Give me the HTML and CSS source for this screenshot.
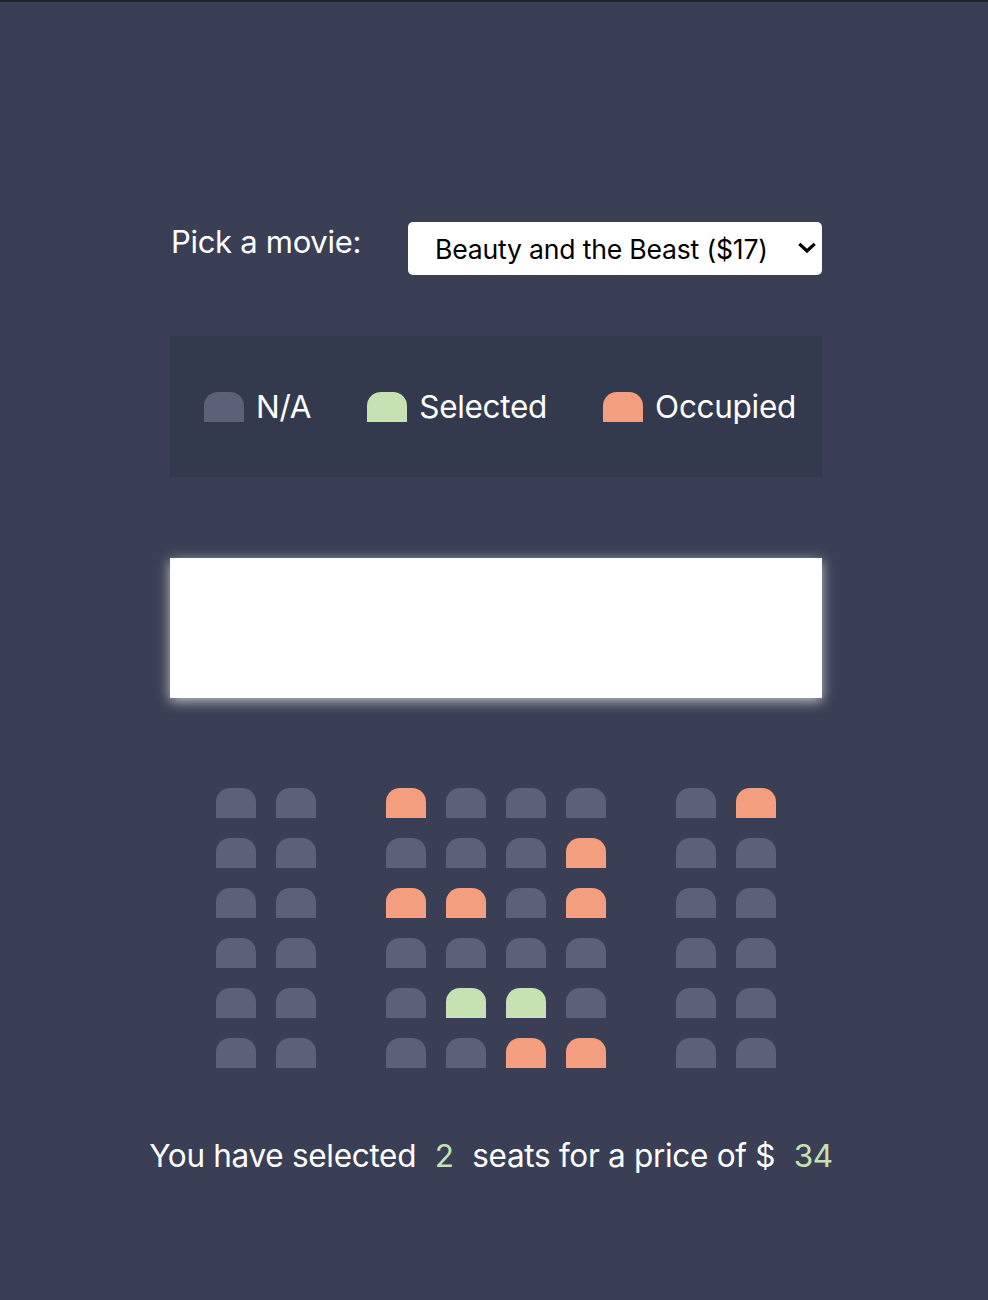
FILE: index.html
```html
<!DOCTYPE html>
<html lang="en">
<head>
<meta charset="UTF-8">
<title>Movie Seat Booking</title>
<link rel="stylesheet" href="styles.css">
</head>
<body>
<div class="page">
  <div class="movie-picker">
    <label class="picker-label" for="movie">Pick a movie:</label>
    <div class="select-wrap">
      <select id="movie" class="movie-select">
        <option>Beauty and the Beast ($17)</option>
      </select>
      <svg class="chevron" width="18" height="12" viewBox="0 0 18 12"><path d="M2.5 3 L9 9 L15.5 3" fill="none" stroke="#000" stroke-width="3.2" stroke-linecap="square" stroke-linejoin="miter"/></svg>
    </div>
  </div>

  <ul class="showcase">
    <li class="legend-item"><span class="seat"></span><span class="legend-text">N/A</span></li>
    <li class="legend-item"><span class="seat selected"></span><span class="legend-text">Selected</span></li>
    <li class="legend-item"><span class="seat occupied"></span><span class="legend-text">Occupied</span></li>
  </ul>

  <div class="screen"></div>

  <div class="seats">
    <div class="row">
      <span class="seat"></span><span class="seat"></span><span class="seat occupied"></span><span class="seat"></span><span class="seat"></span><span class="seat"></span><span class="seat"></span><span class="seat occupied"></span>
    </div>
    <div class="row">
      <span class="seat"></span><span class="seat"></span><span class="seat"></span><span class="seat"></span><span class="seat"></span><span class="seat occupied"></span><span class="seat"></span><span class="seat"></span>
    </div>
    <div class="row">
      <span class="seat"></span><span class="seat"></span><span class="seat occupied"></span><span class="seat occupied"></span><span class="seat"></span><span class="seat occupied"></span><span class="seat"></span><span class="seat"></span>
    </div>
    <div class="row">
      <span class="seat"></span><span class="seat"></span><span class="seat"></span><span class="seat"></span><span class="seat"></span><span class="seat"></span><span class="seat"></span><span class="seat"></span>
    </div>
    <div class="row">
      <span class="seat"></span><span class="seat"></span><span class="seat"></span><span class="seat selected"></span><span class="seat selected"></span><span class="seat"></span><span class="seat"></span><span class="seat"></span>
    </div>
    <div class="row">
      <span class="seat"></span><span class="seat"></span><span class="seat"></span><span class="seat"></span><span class="seat occupied"></span><span class="seat occupied"></span><span class="seat"></span><span class="seat"></span>
    </div>
  </div>

  <p class="summary">You have selected <span class="count">2</span> seats for a price of $ <span class="count">34</span></p>
</div>
</body>
</html>
```

FILE: styles.css
```css
html, body {
  margin: 0;
  padding: 0;
}

body {
  background: #3a3f55;
  border-top: 2px solid #232428;
  min-height: 1298px;
  font-family: Inter, "Noto Sans", sans-serif;
  color: #ffffff;
}

.page {
  width: 652px;
  margin: 0 auto;
  padding: 219px 0 0 4px;
  display: flex;
  flex-direction: column;
  align-items: stretch;
}

.movie-picker {
  display: flex;
  align-items: flex-start;
  justify-content: space-between;
  height: 54px;
}

.picker-label {
  font-size: 31px;
  line-height: 42px;
  padding-left: 1px;
  letter-spacing: -0.3px;
}

.select-wrap {
  position: relative;
  width: 414px;
  height: 53px;
  margin-top: 1px;
}

.movie-select {
  appearance: none;
  -webkit-appearance: none;
  display: block;
  width: 414px;
  height: 53px;
  border: none;
  border-radius: 5px;
  background: #ffffff;
  color: #000000;
  font-family: Inter, "Noto Sans", sans-serif;
  font-size: 26.6px;
  letter-spacing: -0.2px;
  padding: 0 0 0 27px;
  margin: 0;
}

.chevron {
  position: absolute;
  right: 6px;
  top: 20px;
  pointer-events: none;
}

.showcase {
  list-style: none;
  margin: 61px 0 0 0;
  padding: 0 26px 0 34px;
  height: 141px;
  background: #343a4e;
  display: flex;
  align-items: center;
  justify-content: space-between;
}

.legend-item {
  display: flex;
  align-items: center;
  gap: 12px;
}

.legend-text {
  font-size: 31.5px;
  line-height: 30px;
  letter-spacing: -0.3px;
}

.seat {
  display: block;
  width: 40px;
  height: 30px;
  background: #5c6178;
  border-top-left-radius: 14px;
  border-top-right-radius: 14px;
}

.seat.selected {
  background: #c6e2b2;
}

.seat.occupied {
  background: #f39e7f;
}

.screen {
  margin-top: 81px;
  height: 140px;
  background: #ffffff;
  box-shadow: 0 3px 12px rgba(255, 255, 255, 0.7);
}

.seats {
  margin-top: 90px;
  display: flex;
  flex-direction: column;
  align-items: center;
  gap: 20px;
}

.row {
  display: flex;
  gap: 20px;
}

.row .seat:nth-child(2),
.row .seat:nth-child(6) {
  margin-right: 50px;
}

.summary {
  margin: 68px -60px 0 -60px;
  text-align: center;
  font-size: 31.5px;
  line-height: 40px;
  letter-spacing: -0.3px;
}

.count {
  color: #c6e2b2;
  margin: 0 10px;
}
```
